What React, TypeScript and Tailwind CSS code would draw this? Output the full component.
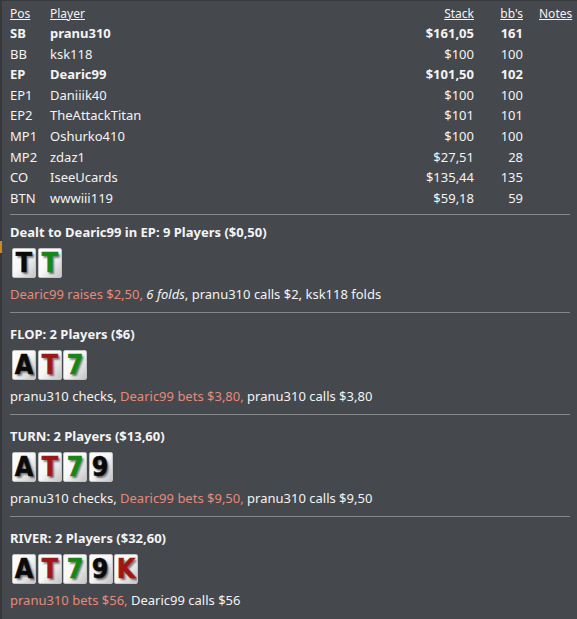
import React from "react";

type Row = { pos: string; name: string; stack: string; bb: string; bold?: boolean };

const rows: Row[] = [
  { pos: "SB", name: "pranu310", stack: "$161,05", bb: "161", bold: true },
  { pos: "BB", name: "ksk118", stack: "$100", bb: "100" },
  { pos: "EP", name: "Dearic99", stack: "$101,50", bb: "102", bold: true },
  { pos: "EP1", name: "Daniiik40", stack: "$100", bb: "100" },
  { pos: "EP2", name: "TheAttackTitan", stack: "$101", bb: "101" },
  { pos: "MP1", name: "Oshurko410", stack: "$100", bb: "100" },
  { pos: "MP2", name: "zdaz1", stack: "$27,51", bb: "28" },
  { pos: "CO", name: "IseeUcards", stack: "$135,44", bb: "135" },
  { pos: "BTN", name: "wwwiii119", stack: "$59,18", bb: "59" },
];

type C = { r: string; c: "k" | "r" | "g" };

function Card({ r, c }: C) {
  const color = c === "k" ? "text-[#0a0a0a]" : c === "r" ? "text-[#a01616]" : "text-[#148814]";
  return (
    <div className="w-[24px] h-[30px] rounded-[2px] border border-[#c4c4c4] bg-gradient-to-br from-white via-[#f6f6f6] to-[#c4c4c4] flex items-center justify-center overflow-hidden">
      <span
        className={`font-['DejaVu_Sans',sans-serif] font-bold text-[26px] leading-none ${color} [text-shadow:2px_2px_2px_rgba(0,0,0,0.5)] [-webkit-text-stroke:0.6px_currentColor] scale-x-[0.92]`}
      >
        {r}
      </span>
    </div>
  );
}

function Cards({ cards }: { cards: C[] }) {
  return (
    <div className="flex gap-[1.5px] mt-[7px] ml-[2px]">
      {cards.map((c, i) => (
        <Card key={i} {...c} />
      ))}
    </div>
  );
}

function Section({
  title,
  cards,
  first,
  children,
}: {
  title: string;
  cards: C[];
  first?: boolean;
  children: React.ReactNode;
}) {
  return (
    <div className={`border-t border-[#85888b] pb-[9px] ${first ? "pt-[8px]" : "pt-[12px]"}`}>
      <div className="font-bold leading-[18px]">{title}</div>
      <Cards cards={cards} />
      <div className="mt-[7px] leading-[18px]">{children}</div>
    </div>
  );
}

const Red = ({ children }: { children: React.ReactNode }) => <span className="text-[#e58a7c]">{children}</span>;

export default function App() {
  return (
    <div className="relative w-[577px] h-[619px] bg-[#45484c] border-t border-l-2 border-[#36383b] text-[#f4f4f4] font-['Noto_Sans',sans-serif] text-[13px]">
      <div className="absolute left-[-2px] top-[240px] w-[2px] h-[12px] bg-[#c98a2e]" />
      <div className="pl-[8px] pr-[7px] pt-[4px]">
        <div className="grid grid-cols-[40px_1fr_100px_49px_47px] leading-[18px] text-[12px]">
          <div className="underline">Pos</div>
          <div className="underline">Player</div>
          <div className="text-right underline">Stack</div>
          <div className="text-right underline">bb's</div>
          <div className="pl-[16px] underline">Notes</div>
        </div>
        <div className="pb-[6px]">
          {rows.map((r) => (
            <div
              key={r.pos}
              className={`grid grid-cols-[40px_1fr_100px_49px_47px] h-[20.6px] leading-[20.6px] ${r.bold ? "font-bold" : ""}`}
            >
              <div>{r.pos}</div>
              <div>{r.name}</div>
              <div className="text-right">{r.stack}</div>
              <div className="text-right">{r.bb}</div>
              <div></div>
            </div>
          ))}
        </div>
        <Section
          first
          title="Dealt to Dearic99 in EP: 9 Players ($0,50)"
          cards={[
            { r: "T", c: "k" },
            { r: "T", c: "g" },
          ]}
        >
          <Red>Dearic99 raises $2,50,</Red> <i>6 folds</i>, pranu310 calls $2, ksk118 folds
        </Section>
        <Section
          title="FLOP: 2 Players ($6)"
          cards={[
            { r: "A", c: "k" },
            { r: "T", c: "r" },
            { r: "7", c: "g" },
          ]}
        >
          pranu310 checks, <Red>Dearic99 bets $3,80,</Red> pranu310 calls $3,80
        </Section>
        <Section
          title="TURN: 2 Players ($13,60)"
          cards={[
            { r: "A", c: "k" },
            { r: "T", c: "r" },
            { r: "7", c: "g" },
            { r: "9", c: "k" },
          ]}
        >
          pranu310 checks, <Red>Dearic99 bets $9,50,</Red> pranu310 calls $9,50
        </Section>
        <Section
          title="RIVER: 2 Players ($32,60)"
          cards={[
            { r: "A", c: "k" },
            { r: "T", c: "r" },
            { r: "7", c: "g" },
            { r: "9", c: "k" },
            { r: "K", c: "r" },
          ]}
        >
          <Red>pranu310 bets $56,</Red> Dearic99 calls $56
        </Section>
      </div>
    </div>
  );
}
